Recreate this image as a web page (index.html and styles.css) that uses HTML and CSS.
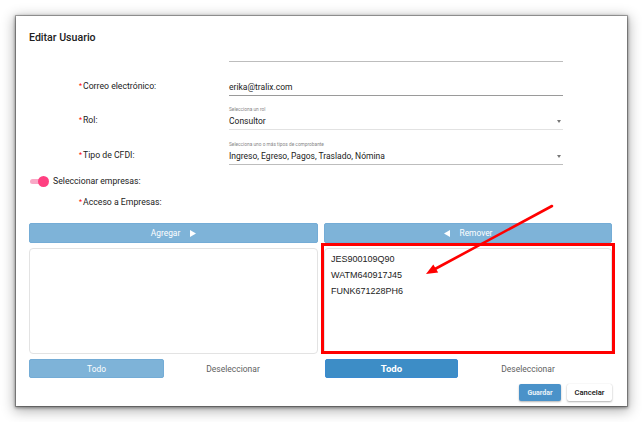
FILE: index.html
```html
<!DOCTYPE html>
<html lang="es">
<head>
<meta charset="utf-8">
<title>Editar Usuario</title>
<link rel="stylesheet" href="styles.css">
</head>
<body>
<div class="dialog">
  <div class="title">Editar Usuario</div>

  <div class="row row0">
    <div class="label"></div>
    <div class="field f0"></div>
  </div>

  <div class="row">
    <div class="label"><span class="req">*</span>Correo electrónico:</div>
    <div class="field f-email"><div class="value">erika@tralix.com</div></div>
  </div>

  <div class="row">
    <div class="label"><span class="req">*</span>Rol:</div>
    <div class="field f-rol">
      <div class="helper">Selecciona un rol</div>
      <div class="value sel">Consultor<span class="caret"></span></div>
    </div>
  </div>

  <div class="row">
    <div class="label"><span class="req">*</span>Tipo de CFDI:</div>
    <div class="field f-tipo">
      <div class="helper">Selecciona uno o más tipos de comprobante</div>
      <div class="value sel">Ingreso, Egreso, Pagos, Traslado, Nómina<span class="caret"></span></div>
    </div>
  </div>

  <div class="toggle-row">
    <div class="toggle"><span class="track"></span><span class="thumb"></span></div>
    <span class="toggle-label">Seleccionar empresas:</span>
  </div>

  <div class="acceso"><span class="req">*</span>Acceso a Empresas:</div>

  <div class="pair actions">
    <div class="btn-bar left">Agregar
      <svg class="tri" width="6" height="7" viewBox="0 0 6 7"><polygon points="0,0 6,3.5 0,7" fill="#fff"/></svg>
    </div>
    <div class="btn-bar right">
      <svg class="tri" width="6" height="7" viewBox="0 0 6 7"><polygon points="6,0 0,3.5 6,7" fill="#fff"/></svg>
      Remover</div>
  </div>

  <div class="pair lists">
    <div class="list left"></div>
    <div class="list right">
      <div class="item">JES900109Q90</div>
      <div class="item">WATM640917J45</div>
      <div class="item">FUNK671228PH6</div>
    </div>
  </div>

  <div class="pair bottoms">
    <div class="half">
      <div class="todo light">Todo</div>
      <div class="desel">Deseleccionar</div>
    </div>
    <div class="half">
      <div class="todo dark">Todo</div>
      <div class="desel">Deseleccionar</div>
    </div>
  </div>

  <div class="footer">
    <div class="btn-save">Guardar</div>
    <div class="btn-cancel">Cancelar</div>
  </div>
</div>

<svg class="annot" width="642" height="422" viewBox="0 0 642 422">
  <rect x="322.5" y="244.5" width="291" height="108" fill="none" stroke="#ff0000" stroke-width="3"/>
  <line x1="552" y1="206" x2="435" y2="269" stroke="#ff0000" stroke-width="2.6" stroke-linecap="round"/>
  <polygon points="426,274 438.2,272.6 433.3,264.4" fill="#ff0000"/>
</svg>
</body>
</html>
```

FILE: styles.css
```css
html, body {
  margin: 0;
  padding: 0;
  background: #ffffff;
}
body {
  width: 642px;
  height: 422px;
  overflow: hidden;
  position: relative;
  font-family: Roboto, "Liberation Sans", Arial, sans-serif;
  color: #222;
}
.dialog {
  margin: 16px 0 0 16px;
  width: 611px;
  height: 390px;
  box-sizing: border-box;
  padding: 0 15px 0 13px;
  background: #fff;
  box-shadow: 0 0 0 1px rgba(0,0,0,0.25), 0 1px 3px 1px rgba(0,0,0,0.4), 0 3px 12px 2px rgba(0,0,0,0.3);
}
.title {
  box-sizing: border-box;
  height: 32px;
  padding-top: 16px;
  font-size: 10.6px;
  line-height: 12px;
  font-weight: 500;
  color: #212121;
}
.row {
  display: grid;
  grid-template-columns: 150px 334px;
  margin-left: 50px;
}
.label {
  align-self: end;
  padding-bottom: 3px;
  font-size: 8.7px;
  line-height: 12px;
  color: #222;
}
.req {
  color: #f00;
  font-size: 7px;
  margin-right: 1px;
  position: relative;
  top: -1px;
}
.field {
  box-sizing: border-box;
  border-bottom: 1px solid #bdbdbd;
}
.f0 { height: 14px; }
.f-email { padding-top: 19px; padding-bottom: 2px; border-bottom-color: #9a9a9a; }
.f-rol { padding-top: 10px; padding-bottom: 2px; border-bottom-color: #e2e2e2; }
.f-tipo { padding-top: 11px; padding-bottom: 2px; border-bottom-color: #bdbdbd; }
.value {
  font-size: 8.5px;
  line-height: 12px;
  color: #222;
}
.sel {
  display: flex;
  justify-content: space-between;
  align-items: center;
}
.caret {
  width: 0;
  height: 0;
  border-left: 2.5px solid transparent;
  border-right: 2.5px solid transparent;
  border-top: 3px solid #777;
  margin-right: 2px;
}
.helper {
  font-size: 4.8px;
  line-height: 8px;
  color: #888;
  margin-bottom: 1px;
}
.toggle-row {
  margin-top: 10px;
  height: 12px;
  display: flex;
  align-items: center;
  gap: 4px;
}
.toggle {
  position: relative;
  width: 19px;
  height: 12px;
  margin-left: 1px;
}
.track {
  position: absolute;
  left: 0;
  top: 3.5px;
  width: 17px;
  height: 5px;
  border-radius: 3px;
  background: #f9a8c6;
}
.thumb {
  position: absolute;
  left: 7.5px;
  top: 0.5px;
  width: 11px;
  height: 11px;
  border-radius: 50%;
  background: #ff4081;
}
.toggle-label {
  font-size: 8.7px;
  line-height: 12px;
  color: #222;
}
.acceso {
  margin-top: 9px;
  margin-left: 50px;
  font-size: 8.7px;
  line-height: 12px;
  color: #222;
}
.pair {
  display: flex;
  gap: 6px;
}
.actions {
  margin-top: 14px;
  height: 20px;
}
.btn-bar {
  box-sizing: border-box;
  height: 20px;
  background: #7eb3d8;
  border: 1px solid #74acd6;
  border-radius: 2px;
  color: #fff;
  font-size: 8.4px;
  display: flex;
  align-items: center;
  justify-content: center;
  gap: 10px;
}
.btn-bar.left { width: 289px; }
.btn-bar.right { width: 288px; }
.tri { display: block; }
.lists {
  margin-top: 5px;
  height: 106px;
}
.list {
  box-sizing: border-box;
  height: 106px;
  border: 1px solid #e3e3e3;
  border-radius: 4px;
  padding: 2px 6px;
}
.list.left { width: 289px; }
.list.right { width: 288px; }
.item {
  font-family: "Liberation Sans", Arial, sans-serif;
  font-size: 9px;
  line-height: 16px;
  color: #222;
}
.bottoms {
  margin-top: 5px;
  height: 19px;
}
.half {
  display: flex;
  width: 289px;
}
.half + .half { width: 288px; }
.todo {
  box-sizing: border-box;
  height: 19px;
  border-radius: 2px;
  color: #fff;
  display: flex;
  align-items: center;
  justify-content: center;
}
.todo.light {
  width: 135px;
  background: #7eb3d8;
  border: 1px solid #74acd6;
  font-size: 8.4px;
}
.todo.dark {
  width: 133px;
  margin-left: 1px;
  background: #3d8dc6;
  border: 1px solid #3a8ad0;
  font-size: 9.6px;
  font-weight: 700;
}
.desel {
  width: 138px;
  height: 19px;
  display: flex;
  align-items: center;
  justify-content: center;
  font-size: 8.5px;
  color: #5f5f5f;
}
.half + .half .desel { width: 140px; }
.footer {
  margin-top: 6px;
  display: flex;
  justify-content: flex-end;
  gap: 6px;
}
.btn-save {
  width: 42px;
  height: 17px;
  border-radius: 2px;
  background: #4a92c9;
  box-shadow: 0 1px 2px rgba(0,0,0,0.3);
  color: #e8f1f8;
  font-size: 7px;
  font-weight: 700;
  display: flex;
  align-items: center;
  justify-content: center;
}
.btn-cancel {
  width: 45px;
  height: 17px;
  border-radius: 2px;
  background: #fff;
  box-shadow: 0 1px 2px rgba(0,0,0,0.3), 0 0 1px rgba(0,0,0,0.15);
  color: #111;
  font-size: 7.6px;
  font-weight: 500;
  display: flex;
  align-items: center;
  justify-content: center;
}
.annot {
  position: absolute;
  left: 0;
  top: 0;
  pointer-events: none;
}
```
